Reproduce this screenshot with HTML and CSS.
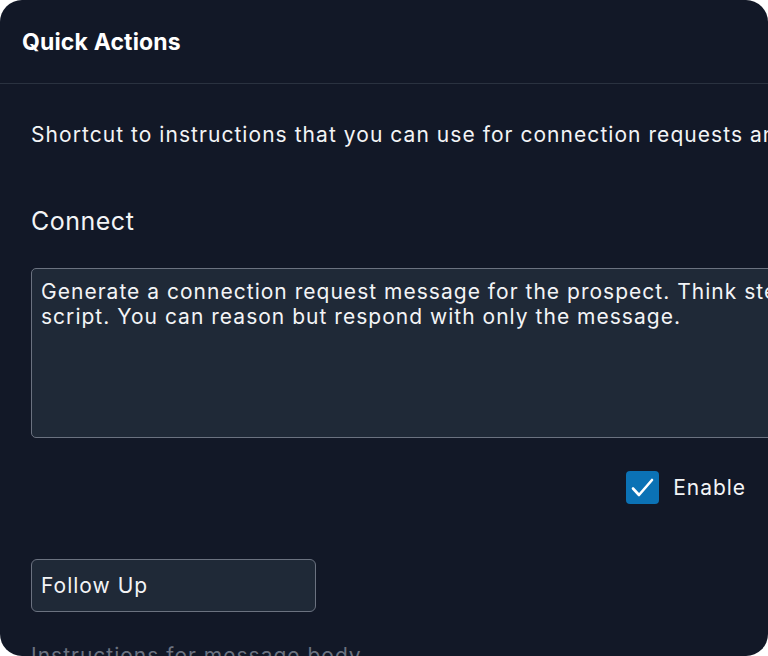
FILE: index.html
```html
<!DOCTYPE html>
<html lang="en">
<head>
<meta charset="utf-8">
<title>Quick Actions</title>
<link rel="stylesheet" href="styles.css">
</head>
<body>
<div class="card">
  <header class="card-header">
    <h1 class="title">Quick Actions</h1>
  </header>
  <main class="card-body">
    <p class="intro">Shortcut to instructions that you can use for connection requests and messages.</p>
    <section class="action">
      <h2 class="action-name">Connect</h2>
      <textarea class="prompt" rows="6">Generate a connection request message for the prospect. Think step by step and follow the
script. You can reason but respond with only the message.</textarea>
      <label class="enable-row">
        <span class="checkbox"><svg viewBox="0 0 33 33" width="33" height="33"><path d="M7 17.5l6 6.5L26 9" fill="none" stroke="#fff" stroke-width="2.6" stroke-linecap="round" stroke-linejoin="round"/></svg></span>
        <span class="enable-text">Enable</span>
      </label>
    </section>
    <section class="action">
      <input class="name-input" type="text" value="Follow Up">
      <p class="hint">Instructions for message body</p>
    </section>
  </main>
</div>
</body>
</html>
```
FILE: styles.css
```css
html, body {
  margin: 0;
  padding: 0;
  background: #ffffff;
}
body {
  width: 768px;
  height: 656px;
  overflow: hidden;
  font-family: Inter, "Noto Sans", sans-serif;
  color: #f3f4f6;
}
.card {
  width: 768px;
  height: 656px;
  background: #121827;
  border-radius: 22px;
  overflow: hidden;
  box-sizing: border-box;
}
.card-header {
  height: 83px;
  border-bottom: 1px solid #2a3240;
  display: flex;
  align-items: center;
  padding-left: 22px;
}
.title {
  margin: 0;
  font-size: 23px;
  font-weight: 700;
  color: #ffffff;
  letter-spacing: 0.15px;
}
.card-body {
  padding-left: 31px;
}
.intro {
  margin: 37px 0 0 0;
  font-size: 21px;
  letter-spacing: 1.05px;
  line-height: 28px;
  white-space: nowrap;
  color: #f3f4f6;
}
.action {
  display: flex;
  flex-direction: column;
  align-items: flex-start;
}
.action-name {
  margin: 58px 0 0 0;
  font-size: 25px;
  font-weight: 400;
  letter-spacing: 0.5px;
  line-height: 28px;
  color: #f3f4f6;
}
.prompt {
  margin-top: 33px;
  width: 1400px;
  height: 170px;
  box-sizing: border-box;
  background: #1f2937;
  border: 1px solid #6b7280;
  border-radius: 5px;
  padding: 10px 9px;
  font-family: Inter, "Noto Sans", sans-serif;
  font-size: 21px;
  letter-spacing: 1.02px;
  line-height: 25px;
  color: #f3f4f6;
  resize: none;
  outline: none;
  overflow: hidden;
}
.enable-row {
  align-self: stretch;
  margin-top: 33px;
  margin-right: 22px;
  display: flex;
  justify-content: flex-end;
  align-items: center;
  gap: 14px;
  margin-left: -31px;
}
.checkbox {
  width: 33px;
  height: 33px;
  border-radius: 4px;
  background: #0b72b5;
  display: flex;
  align-items: center;
  justify-content: center;
}
.enable-text {
  font-size: 21px;
  letter-spacing: 0.95px;
  color: #f3f4f6;
}
.name-input {
  margin-top: 55px;
  width: 285px;
  height: 53px;
  box-sizing: border-box;
  background: #1f2937;
  border: 1px solid #6b7280;
  border-radius: 6px;
  padding: 0 9px;
  font-family: Inter, "Noto Sans", sans-serif;
  font-size: 21px;
  letter-spacing: 1px;
  color: #f3f4f6;
  outline: none;
}
.hint {
  margin: 30px 0 0 0;
  font-size: 21px;
  letter-spacing: 1px;
  line-height: 28px;
  color: #6b7280;
  white-space: nowrap;
}
```
